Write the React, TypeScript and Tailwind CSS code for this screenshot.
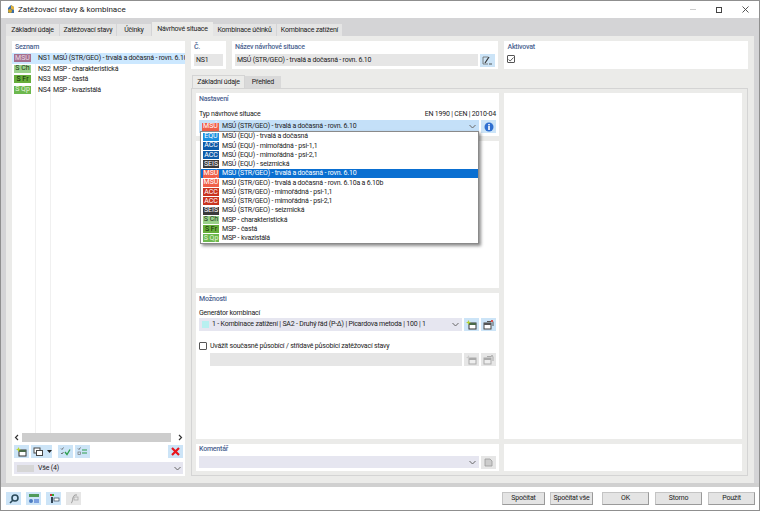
import React from "react";

const fontCls = "font-['Roboto',_sans-serif]";

const Badge = ({ text, color, w = "w-[17px]" }: { text: string; color: string; w?: string }) => (
  <span className={`flex h-[8px] shrink-0 items-center justify-center text-[7px] leading-none tracking-normal ${w} ${color}`}>
    {text}
  </span>
);

const Chevron = ({ color = "#666" }: { color?: string }) => (
  <svg width="7" height="5" viewBox="0 0 7 5" className="shrink-0">
    <path d="M0.5 1 L3.5 4 L6.5 1" fill="none" stroke={color} strokeWidth="1" />
  </svg>
);

const TinyBtn = ({ children, off }: { children: React.ReactNode; off?: boolean }) => (
  <div className={`flex h-[13px] w-[15px] shrink-0 items-center justify-center ${off ? "bg-[#e6e6e6]" : "bg-[#cce4f7]"}`}>
    {children}
  </div>
);

const NewIcon = ({ off }: { off?: boolean }) => (
  <svg width="11" height="10" viewBox="0 0 11 10">
    <rect x="3" y="3" width="7" height="6" fill={off ? "#eee" : "#fff"} stroke={off ? "#aaa" : "#333"} strokeWidth="1" />
    <rect x="3" y="3" width="7" height="2" fill={off ? "#aaa" : "#4a6a4a"} />
    <path d="M2.5 0 L3.2 1.8 L5 2.5 L3.2 3.2 L2.5 5 L1.8 3.2 L0 2.5 L1.8 1.8 Z" fill={off ? "#ccc" : "#b5d334"} />
  </svg>
);

const CopyIcon = ({ off }: { off?: boolean }) => (
  <svg width="11" height="10" viewBox="0 0 11 10">
    <rect x="1" y="3" width="7" height="6" fill={off ? "#eee" : "#fff"} stroke={off ? "#aaa" : "#444"} strokeWidth="1" />
    <rect x="1" y="3" width="7" height="2" fill={off ? "#aaa" : "#555"} />
    <path d="M4 1.5 H10 V6" fill="none" stroke={off ? "#aaa" : "#555"} strokeWidth="1" />
    <rect x="8" y="0" width="2" height="2" fill={off ? "#bbb" : "#d9534f"} />
  </svg>
);

const listRows = [
  { badge: "MSÚ", color: "bg-[#a5708f] text-[#e8dce4]", no: "NS1", name: "MSÚ (STR/GEO) - trvalá a dočasná - rovn. 6.10", sel: true },
  { badge: "S Ch", color: "bg-[#9ad08a] text-[#1e3a16]", no: "NS2", name: "MSP - charakteristická" },
  { badge: "S Fr", color: "bg-[#66ad3a] text-[#142a08]", no: "NS3", name: "MSP - častá" },
  { badge: "S Qp", color: "bg-[#6cb84e] text-[#e4f2dc]", no: "NS4", name: "MSP - kvazistálá" },
];

const comboRows = [
  { badge: "EQU", color: "bg-[#1c8fe0] text-white", name: "MSÚ (EQU) - trvalá a dočasná" },
  { badge: "ACC", color: "bg-[#0f5aa8] text-white", name: "MSÚ (EQU) - mimořádná - psi-1,1" },
  { badge: "ACC", color: "bg-[#0f5aa8] text-white", name: "MSÚ (EQU) - mimořádná - psi-2,1" },
  { badge: "SEIS", color: "bg-[#3a3a3a] text-white", name: "MSÚ (EQU) - seizmická" },
  { badge: "MSÚ", color: "bg-[#f0604a] text-white", name: "MSÚ (STR/GEO) - trvalá a dočasná - rovn. 6.10", sel: true },
  { badge: "MSÚ", color: "bg-[#f0604a] text-white", name: "MSÚ (STR/GEO) - trvalá a dočasná - rovn. 6.10a a 6.10b" },
  { badge: "ACC", color: "bg-[#c9341f] text-white", name: "MSÚ (STR/GEO) - mimořádná - psi-1,1" },
  { badge: "ACC", color: "bg-[#c9341f] text-white", name: "MSÚ (STR/GEO) - mimořádná - psi-2,1" },
  { badge: "SEIS", color: "bg-[#3a3a3a] text-white", name: "MSÚ (STR/GEO) - seizmická" },
  { badge: "S Ch", color: "bg-[#9ad08a] text-[#1e3a16]", name: "MSP - charakteristická" },
  { badge: "S Fr", color: "bg-[#66ad3a] text-[#142a08]", name: "MSP - častá" },
  { badge: "S Qp", color: "bg-[#6cb84e] text-[#e4f2dc]", name: "MSP - kvazistálá" },
];

const topTabs = [
  { label: "Základní údaje", w: "w-[54px]" },
  { label: "Zatěžovací stavy", w: "w-[57px]" },
  { label: "Účinky", w: "w-[35px]" },
  { label: "Návrhové situace", w: "w-[61px]", active: true },
  { label: "Kombinace účinků", w: "w-[64px]" },
  { label: "Kombinace zatížení", w: "w-[66px]" },
];

const Label = ({ children }: { children: React.ReactNode }) => (
  <div className="text-[7px] font-medium leading-[10px] text-[#4d6491]">{children}</div>
);

const FooterBtn = ({ label, w }: { label: string; w: string }) => (
  <div className={`flex h-[13px] items-center justify-center whitespace-nowrap border border-[#c4c4c4] border-b-[#9a9a9a] border-r-[#9a9a9a] bg-[#e4e4e4] text-[7px] text-[#222] ${w}`}>
    {label}
  </div>
);

export default function App() {
  return (
    <div className={`flex h-[511px] w-[760px] flex-col overflow-hidden border border-[#8f8f8f] bg-white text-[7px] tracking-[-0.2px] text-[#222] ${fontCls}`}>
      {/* title */}
      <div className="flex h-[17px] shrink-0 items-center bg-white pl-[5px] pr-[10px]">
        <svg width="10" height="11" viewBox="0 0 10 11" className="mr-[2px]">
          <path d="M2 9 L2 4 L5 1 L8 3 L8 9 Z" fill="#3b6ea8" />
          <path d="M5 1 L8 3 L8 6 L5 5 Z" fill="#e2b23a" />
          <circle cx="4" cy="7" r="2" fill="#d4a72c" />
        </svg>
        <span className="text-[8px] tracking-normal text-[#222]">Zatěžovací stavy &amp; kombinace</span>
        <div className="ml-auto flex items-center gap-[20px]">
          <div className="h-px w-[6px] bg-[#ccc]" />
          <div className="h-[6px] w-[6px] border border-[#444]" />
          <svg width="7" height="7" viewBox="0 0 7 7">
            <path d="M0.5 0.5 L6.5 6.5 M6.5 0.5 L0.5 6.5" stroke="#444" strokeWidth="0.9" />
          </svg>
        </div>
      </div>

      {/* tab strip */}
      <div className="flex h-[18px] shrink-0 items-end bg-[#d4d4d6] pl-[5px]">
        {topTabs.map((t) => (
          <div
            key={t.label}
            className={`flex items-center justify-center whitespace-nowrap text-[7px] ${t.w} ${
              t.active ? "h-[14px] bg-[#ebebe9]" : "h-[12px] border-r border-[#d4d4d6] bg-[#e4e4e4]"
            }`}
          >
            {t.label}
          </div>
        ))}
      </div>

      {/* main area */}
      <div className="flex min-h-0 flex-1 bg-[#d4d4d6] px-[5px]">
        <div className="flex min-w-0 flex-1 gap-[6px] bg-[#ebebe9] px-[6px] pb-[7px] pt-[5px]">
          {/* left list */}
          <div className="flex w-[173px] shrink-0 flex-col bg-white">
            <div className="h-[12px] pl-[3px] pt-px">
              <Label>Seznam</Label>
            </div>
            <div className="relative min-h-0 flex-1 overflow-hidden">
              <div className="absolute bottom-0 left-[23px] top-0 w-px bg-[#f0f0f0]" />
              <div className="absolute bottom-0 left-[38px] top-0 w-px bg-[#f0f0f0]" />
              {listRows.map((r) => (
                <div
                  key={r.no}
                  className={`relative flex h-[10.5px] items-center whitespace-nowrap pl-[2px] text-[7px] ${r.sel ? "bg-[#cce8ff]" : ""}`}
                >
                  <Badge text={r.badge} color={r.color} />
                  <span className="ml-[7px] w-[15px] shrink-0">{r.no}</span>
                  <span>{r.name}</span>
                </div>
              ))}
            </div>
            <div className="flex h-[9px] items-center px-[1px]">
              <svg width="9" height="7" viewBox="0 0 9 7"><path d="M5 1 L2.5 3.5 L5 6" fill="none" stroke="#333" strokeWidth="1.2" /></svg>
              <div className="h-[9px] w-[149px] bg-[#cdcdcd]" />
              <svg width="9" height="7" viewBox="0 0 9 7" className="ml-auto"><path d="M4 1 L6.5 3.5 L4 6" fill="none" stroke="#333" strokeWidth="1.2" /></svg>
            </div>
            <div className="mt-[3px] flex h-[13px] items-center gap-[2px] px-[2px]">
              <TinyBtn><NewIcon /></TinyBtn>
              <div className="flex h-[13px] w-[21px] items-center bg-[#cce4f7] pl-[2px]">
                <svg width="11" height="10" viewBox="0 0 11 10">
                  <rect x="1" y="1" width="6" height="5" fill="#fff" stroke="#444" />
                  <rect x="3.5" y="3.5" width="6" height="5" fill="#fff" stroke="#444" />
                </svg>
                <svg width="5" height="3" viewBox="0 0 5 3" className="ml-[3px]"><path d="M0 0 H5 L2.5 3 Z" fill="#222" /></svg>
              </div>
              <div className="ml-[4px]"><TinyBtn>
                <svg width="11" height="9" viewBox="0 0 11 9">
                  <path d="M1 1.5 L2 2.5 L3.5 0.5 M1 6 L2 7 L3.5 5" fill="none" stroke="#555" strokeWidth="0.8" />
                  <path d="M5 5 L7 7.5 L10 2.5" fill="none" stroke="#2f9e4f" strokeWidth="1.3" />
                </svg>
              </TinyBtn></div>
              <TinyBtn>
                <svg width="11" height="9" viewBox="0 0 11 9">
                  <path d="M1 1.5 L2 2.5 L3.5 0.5" fill="none" stroke="#555" strokeWidth="0.8" />
                  <rect x="1" y="5" width="2.5" height="2.5" fill="none" stroke="#777" strokeWidth="0.7" />
                  <path d="M5 3 H10 M10 6 H5" stroke="#2f9e4f" strokeWidth="1.1" />
                </svg>
              </TinyBtn>
              <div className="ml-auto"><TinyBtn>
                <svg width="9" height="9" viewBox="0 0 9 9"><path d="M1 1 L8 8 M8 1 L1 8" stroke="#e8141c" strokeWidth="2.2" /></svg>
              </TinyBtn></div>
            </div>
            <div className="mx-[2px] mb-[2px] mt-[4px] flex h-[12px] items-center bg-[#e6e6f0] pl-[3px] pr-[2px] text-[7px]">
              <div className="h-[7px] w-[17px] bg-[#d6d6d6]" />
              <span className="ml-[4px]">Vše (4)</span>
              <div className="ml-auto"><Chevron /></div>
            </div>
          </div>

          {/* right column */}
          <div className="flex min-w-0 flex-1 flex-col">
            <div className="flex h-[28px] shrink-0 gap-[6px]">
              <div className="flex w-[35px] flex-col bg-white px-[3px] pt-px">
                <Label>Č.</Label>
                <div className="mt-[2px] flex h-[12px] items-center bg-[#e6e6e6] pl-[2px] text-[7px]">NS1</div>
              </div>
              <div className="flex w-[267px] flex-col bg-white px-[3px] pt-px">
                <Label>Název návrhové situace</Label>
                <div className="mt-[2px] flex gap-[2px]">
                  <div className="flex h-[12px] flex-1 items-center bg-[#e6e6e6] pl-[2px] text-[7px]">
                    MSÚ (STR/GEO) - trvalá a dočasná - rovn. 6.10
                  </div>
                  <TinyBtn>
                    <svg width="11" height="9" viewBox="0 0 11 9">
                      <path d="M1 1 H6 M1 1 V8 H6" fill="none" stroke="#666" strokeWidth="0.8" />
                      <path d="M3 7 L7 1" stroke="#333" strokeWidth="1.2" />
                      <path d="M7 8 H10" stroke="#333" strokeWidth="0.8" />
                    </svg>
                  </TinyBtn>
                </div>
              </div>
              <div className="flex w-[244px] flex-col bg-white px-[3px] pt-px">
                <Label>Aktivovat</Label>
                <div className="mt-[3px] flex h-[8px] w-[8px] items-center justify-center rounded-[1px] border border-[#555]">
                  <svg width="6" height="5" viewBox="0 0 6 5"><path d="M0.5 2.5 L2.2 4 L5.5 0.5" fill="none" stroke="#333" strokeWidth="0.8" /></svg>
                </div>
              </div>
            </div>

            {/* inner tabs */}
            <div className="mt-[6px] flex h-[13px] shrink-0 items-end pl-px">
              <div className="flex h-[13px] w-[53px] items-center justify-center border-x border-t border-[#d4d4d4] bg-[#ebebe9] text-[7px]">Základní údaje</div>
              <div className="flex h-[12px] w-[36px] items-center justify-center bg-[#d9d9d9] text-[7px]">Přehled</div>
            </div>
            <div className="flex min-h-0 flex-1 gap-[5px] border border-[#d4d4d4] p-[4px] pr-[5px]">
              <div className="flex w-[303px] shrink-0 flex-col gap-[5px]">
                <div className="relative flex h-[43px] shrink-0 flex-col bg-white px-[3px] pt-px">
                  <Label>Nastavení</Label>
                  <div className="mt-[5px] flex items-center justify-between text-[7px] leading-[10px]">
                    <span>Typ návrhové situace</span>
                    <span>EN 1990 | CEN | 2010-04</span>
                  </div>
                  <div className="mt-[1px] flex gap-[2px]">
                    <div className="flex h-[13px] flex-1 items-center bg-[#c4e0f8] pl-[3px] pr-[3px] text-[7px]">
                      <Badge text="MSÚ" color="bg-[#f0604a] text-white" />
                      <span className="ml-[3px]">MSÚ (STR/GEO) - trvalá a dočasná - rovn. 6.10</span>
                      <div className="ml-auto"><Chevron /></div>
                    </div>
                    <div className="flex h-[13px] w-[15px] items-center justify-center bg-[#cce4f7]">
                      <svg width="10" height="10" viewBox="0 0 10 10">
                        <circle cx="5" cy="5" r="4.5" fill="#2f6fd0" />
                        <rect x="4.2" y="4" width="1.6" height="4" fill="#fff" />
                        <rect x="4.2" y="2" width="1.6" height="1.4" fill="#fff" />
                      </svg>
                    </div>
                  </div>
                  {/* open dropdown */}
                  <div className="absolute left-[4px] top-[38px] z-10 w-[279px] border border-[#8a8a8a] bg-white shadow-[2px_2px_3px_rgba(0,0,0,0.45)]">
                    {comboRows.map((r, i) => (
                      <div
                        key={i}
                        className={`flex h-[9.25px] items-center whitespace-nowrap pl-[2px] text-[7px] ${r.sel ? "bg-[#0a6fd1] text-white" : ""}`}
                      >
                        <Badge text={r.badge} color={r.color} w="w-[16px]" />
                        <span className="ml-[3px]">{r.name}</span>
                      </div>
                    ))}
                  </div>
                </div>
                <div className="min-h-0 flex-1 bg-white" />
                <div className="flex h-[146px] shrink-0 flex-col bg-white px-[3px] pt-px">
                  <Label>Možnosti</Label>
                  <div className="mt-[4px] text-[7px] leading-[10px]">Generátor kombinací</div>
                  <div className="flex gap-[2px]">
                    <div className="flex h-[13px] flex-1 items-center bg-[#e6e6f0] pl-[3px] pr-[3px] text-[7px]">
                      <div className="h-[7px] w-[7px] shrink-0 bg-[#b8f0f0]" />
                      <span className="ml-[3px] whitespace-nowrap">1 - Kombinace zatížení | SA2 - Druhý řád (P-Δ) | Picardova metoda | 100 | 1</span>
                      <div className="ml-auto"><Chevron /></div>
                    </div>
                    <TinyBtn><NewIcon /></TinyBtn>
                    <TinyBtn><CopyIcon /></TinyBtn>
                  </div>
                  <div className="mt-[10px] flex items-center text-[7px] leading-[10px]">
                    <div className="h-[8px] w-[8px] rounded-[1px] border border-[#555]" />
                    <span className="ml-[3px]">Uvážit současně působící / střídavě působící zatěžovací stavy</span>
                  </div>
                  <div className="mt-[2px] flex gap-[2px] pl-[11px]">
                    <div className="h-[13px] flex-1 bg-[#e6e6e6]" />
                    <TinyBtn off><NewIcon off /></TinyBtn>
                    <TinyBtn off><CopyIcon off /></TinyBtn>
                  </div>
                </div>
                <div className="flex h-[27px] shrink-0 flex-col bg-white px-[3px]">
                  <Label>Komentář</Label>
                  <div className="mt-[2px] flex gap-[2px]">
                    <div className="flex h-[12px] flex-1 items-center justify-end bg-[#e6e6f0] pr-[3px]"><Chevron /></div>
                    <TinyBtn off>
                      <svg width="9" height="9" viewBox="0 0 9 9">
                        <path d="M1 1 H6 L8 3 V8 H1 Z" fill="#ccc" stroke="#999" strokeWidth="0.8" />
                      </svg>
                    </TinyBtn>
                  </div>
                </div>
              </div>
              <div className="flex min-w-0 flex-1 flex-col gap-[5px]">
                <div className="min-h-0 flex-1 bg-white" />
                <div className="h-[27px] shrink-0 bg-white" />
              </div>
            </div>
          </div>
        </div>
      </div>

      {/* footer */}
      <div className="h-[4px] shrink-0 bg-[#d0d0d0]" />
      <div className="flex h-[23px] shrink-0 items-center pl-[5px] pr-[4px]">
        <div className="flex gap-[5px]">
          <TinyBtn>
            <svg width="10" height="10" viewBox="0 0 10 10"><circle cx="6" cy="4" r="3" fill="none" stroke="#2a4a5a" strokeWidth="1.6" /><path d="M4 6 L1 9" stroke="#2a4a5a" strokeWidth="1.6" /></svg>
          </TinyBtn>
          <TinyBtn>
            <svg width="12" height="10" viewBox="0 0 12 10"><rect x="1" y="0" width="10" height="3" fill="#4f9a5a" /><circle cx="3" cy="7" r="2" fill="#4a7ac0" /><rect x="6" y="5" width="5" height="4" fill="#7aa0e0" /></svg>
          </TinyBtn>
          <TinyBtn>
            <svg width="12" height="10" viewBox="0 0 12 10"><rect x="2" y="0" width="2" height="2" fill="#c33" /><rect x="4" y="0" width="2" height="2" fill="#3a3" /><rect x="3" y="3" width="2" height="6" fill="#345" /><rect x="6" y="4" width="5" height="3" fill="#fff" stroke="#345" strokeWidth="0.7" /></svg>
          </TinyBtn>
          <TinyBtn off>
            <svg width="10" height="10" viewBox="0 0 10 10"><path d="M2 9 C4 9 3 2 6 1 H8" fill="none" stroke="#999" strokeWidth="1" /><rect x="5" y="3" width="4" height="3" fill="none" stroke="#aaa" strokeWidth="0.8" /></svg>
          </TinyBtn>
        </div>
        <div className="ml-auto flex">
          <FooterBtn label="Spočítat" w="w-[43px]" />
          <div className="w-[5px]" />
          <FooterBtn label="Spočítat vše" w="w-[43px]" />
          <div className="w-[9px]" />
          <FooterBtn label="OK" w="w-[47px]" />
          <div className="w-[6px]" />
          <FooterBtn label="Storno" w="w-[47px]" />
          <div className="w-[6px]" />
          <FooterBtn label="Použít" w="w-[47px]" />
        </div>
      </div>
    </div>
  );
}
